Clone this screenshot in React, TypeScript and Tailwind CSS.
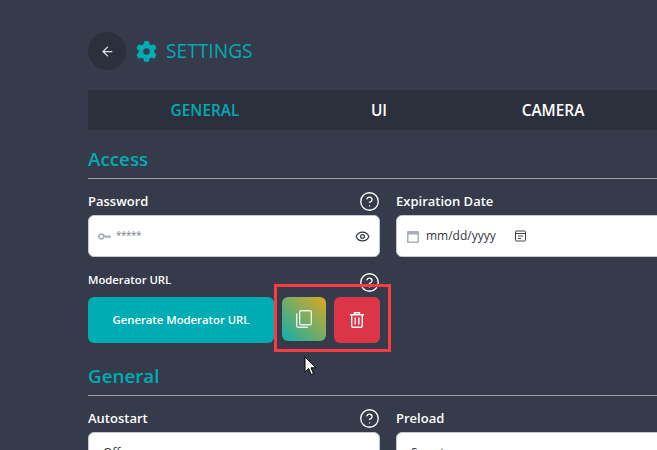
import { ArrowLeft, CircleHelp, Eye } from "lucide-react";
import { ReactNode } from "react";
import { FaGear } from "react-icons/fa6";

const TABS = ["GENERAL", "UI", "CAMERA"];

function Field({ label, help, children }: { label: string; help?: boolean; children: ReactNode }) {
  return (
    <div className="flex w-[292px] shrink-0 flex-col">
      <div className="flex h-[28px] items-center justify-between">
        <span className="text-[13px] leading-none font-semibold text-white">{label}</span>
        {help && <CircleHelp size={21} strokeWidth={1.5} className="text-white" />}
      </div>
      {children}
    </div>
  );
}

function SectionTitle({ title }: { title: string }) {
  return (
    <div className="flex h-[35px] items-center border-b border-[#9aa1ad] pb-[4px] text-[18.8px] leading-none font-semibold text-[#00acb3]">
      {title}
    </div>
  );
}

export default function App() {
  return (
    <div className="relative h-[450px] w-[657px] overflow-hidden bg-[#353b4a] pl-[88px] font-['Open_Sans',sans-serif]">
      <div className="w-[640px]">
        <div className="flex h-[90px] items-center pt-[12px]">
          <div className="flex size-[38px] items-center justify-center rounded-full bg-[#2b303c]">
            <ArrowLeft size={15} className="text-[#dfe1e5]" />
          </div>
          <FaGear size={21} className="ml-[10px] text-[#00acb3]" />
          <span className="ml-[9px] text-[19.2px] text-[#00acb3]">SETTINGS</span>
        </div>

        <div className="flex h-[40px] items-center bg-[#2b303c] pt-[1px] pl-[30px]">
          {TABS.map((tab, i) => (
            <div
              key={tab}
              className={
                i === 0
                  ? "w-[174px] text-center text-[15.4px] font-semibold text-[#00acb3]"
                  : "w-[174px] text-center text-[15.4px] font-semibold text-white"
              }
            >
              {tab}
            </div>
          ))}
        </div>

        <div className="mt-[14px]">
          <SectionTitle title="Access" />
        </div>

        <div className="mt-[8px] flex gap-[16px]">
          <Field label="Password" help>
            <div className="flex h-[42px] items-center rounded-md border border-[#c3c8d0] bg-white pr-[9px] pl-[9px]">
              <svg width="13" height="7" viewBox="0 0 13 7" className="text-[#a6acb6]">
                <circle cx="3.4" cy="3.5" r="2.5" fill="none" stroke="currentColor" strokeWidth="1.7" />
                <path fill="currentColor" d="M5.5 2.5H13V4.2H11.8V5.2H10.4V4.2H9.2V5.2H7.8V4.2H5.5z" />
              </svg>
              <span className="ml-[5px] -translate-y-px text-[10px] tracking-[-0.5px] text-[#7b818c]">*****</span>
              <Eye size={15} className="ml-auto text-[#343a40]" />
            </div>
          </Field>
          <Field label="Expiration Date">
            <div className="flex h-[42px] items-center rounded-md border border-[#c3c8d0] bg-white pl-[10px]">
              <svg width="12" height="13" viewBox="0 0 12 13" className="text-[#a9afb9]">
                <path fill="currentColor" d="M1 1h10a1 1 0 0 1 1 1v10a1 1 0 0 1-1 1H1a1 1 0 0 1-1-1V2a1 1 0 0 1 1-1zm.5 3.5V11.5h9V4.5z" />
              </svg>
              <span className="ml-[7px] text-[12px] text-[#343a40]">mm/dd/yyyy</span>
              <svg width="11" height="12" viewBox="0 0 11 12" fill="none" className="ml-[19px] text-[#444]">
                <rect x="0.5" y="1" width="10" height="10" rx="1" stroke="currentColor" />
                <path stroke="currentColor" d="M0.5 3.5h10M3 6h5M3 8.5h3" />
              </svg>
            </div>
          </Field>
        </div>

        <div className="mt-[14px] w-[292px]">
          <div className="flex h-[18px] items-center justify-between">
            <span className="text-[11.3px] leading-none font-semibold text-white">Moderator URL</span>
            <CircleHelp size={21} strokeWidth={1.5} className="mt-[4px] text-white" />
          </div>
          <div className="mt-[8px] flex items-start gap-[8px]">
            <div className="flex h-[46px] w-[186px] items-center justify-center rounded-md bg-[#00acb3] text-[11.3px] font-semibold text-white">
              Generate Moderator URL
            </div>
            <div className="flex size-[44px] items-center justify-center rounded-md bg-[linear-gradient(to_top_right,#0fb0ac,#dca81f)]">
              <svg width="16" height="18" viewBox="0 0 16 18" fill="none" stroke="#e6eee9" strokeWidth="1.4">
                <rect x="3.7" y="0.7" width="11.6" height="14" rx="1.2" />
                <path d="M0.7 3.5V15.8a1.5 1.5 0 0 0 1.5 1.5H12" />
              </svg>
            </div>
            <div className="flex h-[46px] w-[46px] items-center justify-center rounded-md bg-[#dd3548]">
              <svg width="14" height="16" viewBox="0 0 14 16" fill="none" stroke="#fff" strokeWidth="1.4">
                <path d="M0 2.7H14M4.5 2.5V0.8H9.5V2.5" />
                <path d="M1.7 2.7V14a1.3 1.3 0 0 0 1.3 1.3H11a1.3 1.3 0 0 0 1.3-1.3V2.7" />
                <path d="M5.2 5.5V12.5M8.8 5.5V12.5" />
              </svg>
            </div>
          </div>
        </div>

        <div className="mt-[18px]">
          <SectionTitle title="General" />
        </div>

        <div className="mt-[8px] flex gap-[16px]">
          <Field label="Autostart" help>
            <div className="flex h-[42px] items-center rounded-md border border-[#c3c8d0] bg-white pl-[14px] text-[12px] text-[#343a40]">
              Off
            </div>
          </Field>
          <Field label="Preload">
            <div className="flex h-[42px] items-center rounded-md border border-[#c3c8d0] bg-white pl-[14px] text-[12px] text-[#343a40]">
              Smart
            </div>
          </Field>
        </div>
      </div>

      {/* annotation from the screenshot */}
      <div className="absolute top-[284px] left-[274px] h-[68px] w-[117px] border-[3px] border-[#fb3b41]" />
      <svg width="13" height="20" viewBox="0 0 13 20" className="absolute top-[356px] left-[304px]">
        <path d="M1 1v15l3.6-3.4 2.5 5.9 2.4-1-2.5-5.7h5z" fill="#fff" stroke="#000" strokeWidth="1" />
      </svg>
    </div>
  );
}
